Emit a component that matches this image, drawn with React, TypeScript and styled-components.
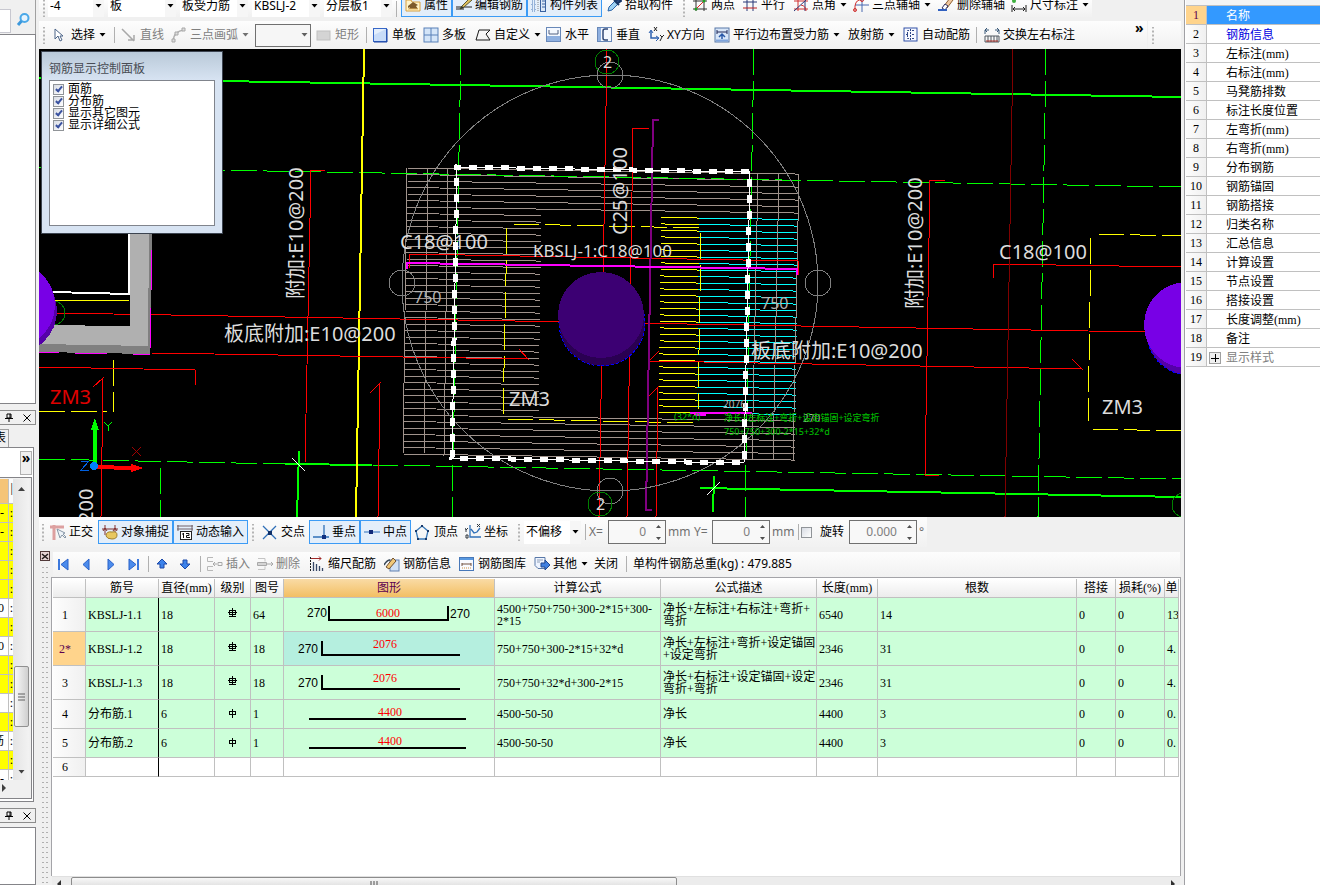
import React from 'react';
import styled, { createGlobalStyle, css } from 'styled-components';

const UI_FONT = '"Noto Sans", "Noto Sans CJK SC", sans-serif';
const GRID_FONT = '"Liberation Serif", "Noto Sans CJK SC", serif';

const GlobalStyle = createGlobalStyle`
  *, *::before, *::after { box-sizing: border-box; }
  body {
    margin: 0;
    background: #f0f0f0;
    color: #000;
    font: 12px/16px ${UI_FONT};
  }
  button, input, select { font: inherit; color: inherit; margin: 0; border-radius: 0; }
`;

/* ---------- layout ---------- */

const Shell = styled.div`
  display: grid;
  grid-template-columns: 39px minmax(0, 1fr) 136px;
  height: 100vh;
  overflow: hidden;
`;

const Workspace = styled.main`
  display: flex;
  flex-direction: column;
  min-width: 0;
  min-height: 0;
  padding-right: 3px;
`;

/* ---------- toolbar parts ---------- */

const ToolRow = styled.div`
  display: flex;
  flex: none;
  height: 28px;
  margin-top: 4px;
  gap: 1px;
`;

const Bar = styled.div<{ $grow?: boolean }>`
  display: flex;
  align-items: center;
  flex: ${p => (p.$grow ? '1 1 0' : 'none')};
  min-width: 0;
  overflow: hidden;
  white-space: nowrap;
  background: linear-gradient(#fdfdfd, #f1f1f1);
`;

const TopBar = styled(Bar)`
  align-items: flex-end;
  align-self: flex-start;
  height: 17px;
`;

const TailBar = styled(Bar)`
  width: 33px;
`;

const Grip = styled.span<{ $w?: number }>`
  flex: none;
  width: ${p => p.$w ?? 9}px;
  height: 17px;
  background: radial-gradient(circle, #b4b4b4 1px, transparent 1px) center / 4px 4px repeat-y;
`;

const Divider = styled.span<{ $w?: number }>`
  flex: none;
  width: ${p => p.$w ?? 6}px;
  height: 16px;
  background: linear-gradient(#b0b0b0, #b0b0b0) center / 1px 100% no-repeat;
`;

const Tool = styled.button<{ $w: number; $on?: boolean; $center?: boolean }>`
  display: flex;
  align-items: center;
  justify-content: ${p => (p.$center ? 'center' : 'flex-start')};
  gap: 3px;
  flex: none;
  width: ${p => p.$w}px;
  height: 24px;
  padding: ${p => (p.$center ? '0' : p.$on ? '0 3px' : '0 4px')};
  border: 0;
  background: transparent;
  white-space: nowrap;
  text-align: left;
  &:disabled { color: #808080; }
  ${p => p.$on && css`
    border: 1px solid #3c9bf5;
    background: #e3eefa;
  `}
`;

const PickWrap = styled.span<{ $w: number; $boxed?: boolean }>`
  display: flex;
  align-items: center;
  flex: none;
  position: relative;
  width: ${p => p.$w}px;
  height: 23px;
  background: linear-gradient(90deg, #fff calc(100% - 11px), #f6f6f6 calc(100% - 11px));
  ${p => p.$boxed && css`
    margin: 0 1px 0 3px;
    border: 1px solid #707070;
    background: #f6f6f6;
  `}
`;

const PickBox = styled.select`
  appearance: none;
  width: 100%;
  height: 100%;
  padding: 0 12px 0 2px;
  border: 0;
  background: transparent;
`;

const PickArrow = styled.span`
  display: flex;
  position: absolute;
  right: 2px;
  pointer-events: none;
`;

const TopPicks = styled.div`
  display: flex;
  gap: 4px;
`;

const Chevron = styled.span`
  margin-left: auto;
  width: 12px;
  font-size: 14px;
  font-weight: 700;
  line-height: 14px;
  align-self: flex-start;
`;

/* ---------- icons ---------- */

const Caret = ({ c = '#000' }: { c?: string }) => (
  <svg width="7" height="4" viewBox="0 0 7 4" aria-hidden="true"><path d="M.5 0h6L3.5 3.5z" fill={c} /></svg>
);

const DropCaret = styled.span`
  display: flex;
  margin-left: 1px;
`;

const Glyph = styled.svg`
  flex: none;
  width: 16px;
  height: 16px;
  fill: none;
  stroke-width: 1;
`;

const art: Record<string, React.ReactNode> = {
  props: <><path d="M1 3h5l1 2h8v9H1z" fill="#fff3c8" stroke="#d8a040" /><path d="M3 9l5-4 5 3-2 1 2 3H4l1-2-2 1z" fill="#7d5a2c" /><path d="M3 12h10" stroke="#e8b860" /></>,
  edit: <><path d="M0 10h16M0 12h8" stroke="#202020" /><path d="M5 10L14 1l2 2-8 7-4 2z" fill="#e0c060" stroke="#5a5a30" /><path d="M4 12l2-3 2 2z" fill="#303030" /></>,
  list: <><path d="M1 1h3v3H1zM1 6h3v3H1zM1 11h3v3H1z" stroke="#4a78b8" strokeDasharray="1 1" /><path d="M7 1v14" stroke="#888" strokeDasharray="1 1" /><rect x="9.500" y="1.500" width="5" height="13" fill="#dbe8f8" stroke="#3a62a0" /><path d="M11 4h3M11 7h3M11 10h3" stroke="#3a62a0" /></>,
  picker: <><path d="M2 14l1-4 6-6 3 3-6 6z" fill="#9ed2f4" stroke="#2c64a8" /><path d="M8 3l5 5M10 4l2-3 3 3-3 2" stroke="#183868" strokeWidth="2" fill="#2c4c88" /></>,
  twoPoint: <><path d="M4 2v12M12 2v12M1 4h14M1 12h14" stroke="#333" /><path d="M3 13L13 3" stroke="#e02020" /><circle cx="4" cy="12" r="1.500" fill="#20a020" /><circle cx="12" cy="4" r="1.500" fill="#20a020" /></>,
  parallel: <><path d="M5 2v12M11 2v12M1 5h14" stroke="#283878" /><path d="M1 11h14" stroke="#c02020" /></>,
  pointAngle: <><path d="M5 2v12M1 4h14M1 12h14" stroke="#d03030" /><path d="M1 14L13 3M12 4v10" stroke="#283878" /><path d="M8 8q5 1 5 6" stroke="#d03030" /></>,
  threeAxis: <><path d="M9 1v14M2 8h14" stroke="#4868b0" /><path d="M2 14V9Q3 2 9 3" stroke="#d03030" /><circle cx="2" cy="13" r="1.500" stroke="#d03030" /><circle cx="9" cy="3" r="1.500" stroke="#d03030" /></>,
  eraser: <><path d="M6 9l6-8 3 2-6 8z" fill="#f0c8a0" stroke="#906030" /><path d="M4 11l3-4 3 2-3 4z" fill="#fff" stroke="#303060" /><path d="M0 13h9" stroke="#3060c0" strokeWidth="2" /></>,
  measure: <><circle cx="3" cy="4" r="2" fill="#40b040" /><path d="M1 8v7M15 8v7M2 12h12M4 10l-2 2 2 2M12 10l2 2-2 2" stroke="#202020" /></>,
  cursor: <path d="M3 2v10l3-3 2 5 2-1-2-4h3z" fill="#fff" stroke="#4c6488" />,
  line: <path d="M1 2l12 12M7 13h6V8" stroke="#a8a8a8" strokeWidth="1.500" />,
  arc: <><path d="M2 14Q3 4 13 3" stroke="#b0b0b0" strokeWidth="1.500" /><path d="M1 12h3v3H1zM4 5h3v3H4zM11 1h3v3h-3z" fill="#ddd" stroke="#a8a8a8" /></>,
  rect: <rect x="1" y="4" width="13" height="9" fill="#d4d4d4" stroke="#c0c0c0" />,
  slab: <><rect x=".5" y="1.500" width="13" height="13" fill="#e4effc" stroke="#3868c8" /><path d="M1 14V8l12-6v12z" fill="#c8dcf8" /><path d="M14 2v13H1" stroke="#1840a0" /></>,
  slabs: <><rect x="1" y="1" width="14" height="14" fill="#d4e5f8" stroke="#5880b8" /><path d="M8 1v14M1 8h14" stroke="#5880b8" /></>,
  poly: <path d="M1 13L4 3h11l-4 4 4 6z" stroke="#181818" />,
  horiz: <><rect x=".5" y=".5" width="14" height="14" fill="#8fb0e0" stroke="#6888b8" /><path d="M1 1h13v8H1z" fill="#f4f8ff" /><path d="M3 3v4h9V3" stroke="#506080" /></>,
  vert: <><rect x=".5" y=".5" width="14" height="14" fill="#8fb0e0" stroke="#6888b8" /><path d="M4 1h10v13H4z" fill="#f4f8ff" /><path d="M11 2H8Q6 2 6 4v7q0 2 2 2h3" stroke="#304878" strokeWidth="1.500" /></>,
  xy: <><path d="M3 4v7h7" stroke="#2c60b0" strokeWidth="1.500" /><path d="M1 6l2-3 2 3M8 9l3 2-3 3" stroke="#2c60b0" /><path d="M6 0l3 4M9 0L6 4M12 8l2 2 2-2M14 10l-2 4" stroke="#202020" /></>,
  edge: <><rect x="1" y="1" width="14" height="14" fill="#d8e6f8" stroke="#5878a8" /><path d="M3 5h10M3 3v4M13 3v4" stroke="#202858" /><path d="M8 12V8M5 10l3-3 3 3" stroke="#2858a8" strokeWidth="1.500" /><path d="M2 13.500h12" stroke="#7fa4dc" strokeWidth="2" /></>,
  auto: <><rect x="1" y="1" width="13" height="13" fill="#f6f8ff" stroke="#3050a8" /><path d="M6 3.500H4.500v8H6M9 3.500h2M9 11.500h2M3 7.500h3M9 7.500h3M7.500 2v11" stroke="#304888" strokeDasharray="2 1" /></>,
  swap: <><path d="M1 7V3h4M3 1L1 3l2 2M15 7V3h-4M13 1l2 2-2 2" stroke="#385878" /><path d="M1 15V9h14v6zM4 9v6M7 9v6M10 9v6M13 9v6" stroke="#505860" /><path d="M2 14h12" stroke="#b03028" /></>,
  ortho: <><path d="M0 3h14M4 1v15" stroke="#dda0a0" strokeWidth="3" /><path d="M7 5l3 9 2-3 3 3 1-1-3-3 2-1z" fill="#eef3f8" stroke="#8898a8" /></>,
  snap: <><path d="M0 5h16M3 1v10M13 1v10" stroke="#803030" /><path d="M1 7l2-3 2 3M11 7l2-3 2 3" stroke="#803030" /><path d="M4 12q0-5 6-4 5-1 5 3 0 4-5 4-5 0-6-3z" fill="#e8c860" stroke="#a08030" /></>,
  dynamic: <><path d="M0 2h16M0 5h16M1 1v6M15 1v6" stroke="#706068" /><rect x="3.500" y="7.500" width="11" height="8" fill="#fff" stroke="#222" /><path d="M6.500 9v5M5 10h1M9 9.500h3v2H9.500v2H13" stroke="#111" /></>,
  cross: <><path d="M1 2l13 13M14 2L1 15" stroke="#3070b8" strokeWidth="1.300" /><rect x="6" y="7" width="4" height="4" fill="#103068" /></>,
  perp: <><path d="M11 1v12M0 13h16" stroke="#3070b8" strokeWidth="1.300" /><rect x="9" y="11" width="4" height="4" fill="#103080" /></>,
  mid: <><path d="M0 8h16" stroke="#6898d0" strokeWidth="1.500" /><rect x="5" y="6" width="4" height="4" fill="#102878" /></>,
  vertex: <><path d="M7 2l6 5-2 8H3L1 7z" stroke="#3878b8" strokeWidth="1.300" /><path d="M6 1h2v2H6zM0 6h2v2H0zM12 6h2v2h-2zM2 14h2v2H2zM10 14h2v2h-2z" fill="#183868" /></>,
  coord: <><path d="M5 1v12h11M6 5l3 4 3-1 3-4" stroke="#3070b8" strokeWidth="1.300" /><path d="M0 4l1 2 2-2M1 6v2M12 0l3 3M15 0l-3 3M1 11h2v3H1z" stroke="#303840" /></>,
  insert: <><path d="M6 1.500H.5v4H6M6 10.500H.5v4H6" stroke="#b8b8b8" /><path d="M6 8h4M11 6.500h4v3h-4zM8 6L6 8l2 2" stroke="#a8a8a8" /></>,
  remove: <><path d="M1 2.500h7v3M1 13.500h7v-3" stroke="#c4c4c4" /><path d="M.5 6.500h9v3h-9z" fill="#d4d4d4" stroke="#a8a8a8" /><path d="M10 8h6M14 6l2 2-2 2" stroke="#a8a8a8" /></>,
  scale: <><path d="M4.500 15V6M7.500 15V8M10.500 15v-5M13.500 15v-3" stroke="#384868" strokeWidth="1.300" /><path d="M2 2.500h10M10 .5l2 2-2 2" stroke="#a02828" /><path d="M1.500 1v14" stroke="#202020" strokeDasharray="2 1" /></>,
  info: <><rect x="6" y="4" width="9" height="11" fill="#d0e0f4" stroke="#6080b0" /><path d="M2 11l7-9 3 3-7 8z" fill="#f0c878" stroke="#705030" /><path d="M0 9q3-5 6-5" stroke="#384858" strokeWidth="1.500" /></>,
  gallery: <><rect x=".5" y="1.500" width="14" height="13" fill="#f8faff" stroke="#4878b8" /><path d="M1 3h13" stroke="#5898e0" strokeWidth="2" /><path d="M3 7v3M3 8h9M12 7v3" stroke="#705040" /><path d="M3 12h9" stroke="#d09040" strokeDasharray="1 1" /></>,
  other: <><path d="M1 1.500h10v11H4l-3-3z" fill="#eef4ff" stroke="#5878a8" /><path d="M3 4h6M3 6h3" stroke="#90a0b8" /><path d="M7 7h4V4l5 5-5 5v-3H7z" fill="#4080e0" stroke="#204890" /></>,
  first: <><path d="M4 3v11" stroke="#3c78dc" strokeWidth="2" /><path d="M13 3v11L6 8.500z" fill="#4c8cec" stroke="#2860c8" /></>,
  prev: <path d="M11 3v11L5 8.500z" fill="#4c8cec" stroke="#2860c8" />,
  next: <path d="M5 3v11l6-5.500z" fill="#4c8cec" stroke="#2860c8" />,
  last: <><path d="M12 3v11" stroke="#3c78dc" strokeWidth="2" /><path d="M3 3v11l7-5.500z" fill="#4c8cec" stroke="#2860c8" /></>,
  up: <path d="M8 3l5 5h-3v4H6V8H3z" fill="#3c82ea" stroke="#1c48a8" />,
  down: <path d="M8 13l5-5h-3V4H6v4H3z" fill="#3c82ea" stroke="#1c48a8" />,
};

const Icon = ({ n }: { n: string }) => <Glyph viewBox="0 0 16 16" aria-hidden="true">{art[n]}</Glyph>;

type ToolProps = { icon?: string; text?: string; name?: string; w: number; on?: boolean; off?: boolean; drop?: boolean };
const ToolItem = ({ icon, text, name, w, on, off, drop }: ToolProps) => (
  <Tool type="button" $w={w} $on={on} $center={!text} disabled={off} aria-label={name}>
    {icon && <Icon n={icon} />}
    {text}
    {drop && <DropCaret><Caret c={off ? '#707070' : '#000'} /></DropCaret>}
  </Tool>
);

const Pick = ({ value, name, w, boxed }: { value: string; name: string; w: number; boxed?: boolean }) => (
  <PickWrap $w={w} $boxed={boxed}>
    <PickBox aria-label={name} defaultValue={value}><option>{value}</option></PickBox>
    <PickArrow><Caret c={boxed ? '#606060' : '#000'} /></PickArrow>
  </PickWrap>
);

/* ---------- left docks ---------- */

const LeftDock = styled.aside`
  display: flex;
  flex-direction: column;
  min-height: 0;
  overflow: hidden;
`;

const SearchStrip = styled.div`
  display: flex;
  align-items: flex-end;
  flex: none;
  width: 36px;
  height: 34px;
  border-right: 1px solid #a0a0a0;
`;

const SearchBox = styled.input`
  width: 11px;
  height: 24px;
  margin-bottom: 1px;
  padding: 0;
  border: 1px solid #c8c8d0;
  border-left: 0;
  background: #fff;
`;

const SearchButton = styled.button`
  width: 24px;
  height: 24px;
  padding: 0;
  border: 0;
  background: transparent;
`;

const WhitePane = styled.div<{ $h?: number }>`
  flex: ${p => (p.$h ? 'none' : '1 1 0')};
  width: 36px;
  height: ${p => (p.$h ? `${p.$h}px` : 'auto')};
  border: 1px solid #848488;
  border-left: 0;
  background: #fff;
`;

const DockHead = styled.div`
  display: flex;
  align-items: center;
  flex: none;
  justify-content: flex-end;
  gap: 10px;
  width: 36px;
  height: 15px;
  margin: 6px 0 4px;
  padding-right: 4px;
  border: 1px solid #8c8c8c;
  border-left: 0;
`;

const HeadButton = styled.button`
  display: flex;
  padding: 0;
  border: 0;
  background: transparent;
`;

const PaneTab = styled.div`
  display: flex;
  justify-content: flex-end;
  flex: none;
  width: 9px;
  height: 18px;
  padding-right: 2px;
  border: 1px solid #a0a0a0;
  border-left: 0;
  border-bottom: 0;
  overflow: hidden;
`;

const ListFrame = styled.div`
  display: flex;
  flex-direction: column;
  flex: none;
  width: 34px;
  height: 355px;
  border: 1px solid #848488;
  border-left: 0;
  padding: 3px 1px 2px 0;
  background: #fff;
`;

const MoreButton = styled.button`
  align-self: flex-end;
  flex: none;
  width: 12px;
  height: 24px;
  padding: 0 0 10px;
  border: 1px solid #b0b0b0;
  background: #f0f0f0;
  font-size: 14px;
  font-weight: 700;
  line-height: 12px;
`;

const ListGrid = styled.div`
  display: grid;
  flex: 1;
  grid-template-columns: 13px 16px;
  grid-template-rows: 301px 16px;
  min-height: 0;
  margin-top: 2px;
  padding-top: 1px;
  border: 1px solid #848488;
  border-left: 0;
  background: #f0f0f0;
  overflow: hidden;
`;

const ListRows = styled.div`
  overflow: hidden;
`;

const ListRow = styled.div<{ $tone: string; $h?: number }>`
  display: grid;
  grid-template-columns: 8px 5px;
  height: ${p => p.$h ?? 19}px;
  border-bottom: 1px solid #c0c0c0;
  background: ${p => p.$tone};
  font-family: ${GRID_FONT};
  line-height: 18px;
  overflow: hidden;
`;

const ListCell = styled.span<{ $edge?: boolean }>`
  display: flex;
  justify-content: flex-end;
  padding-right: ${p => (p.$edge ? 0 : 4)}px;
  border-left: ${p => (p.$edge ? '1px solid #c0c0c0' : '0')};
  overflow: hidden;
`;

const VScroll = styled.div`
  display: flex;
  flex-direction: column;
  align-items: center;
  justify-content: space-between;
  padding: 8px 0 6px;
  background: linear-gradient(90deg, #e4e4e4, #f2f2f2);
`;

const VThumb = styled.div`
  display: flex;
  align-items: center;
  justify-content: center;
  width: 15px;
  height: 61px;
  margin-top: 132px;
  border: 1px solid #909090;
  border-radius: 2px;
  background: linear-gradient(90deg, #f8f8f8, #cfcfcf);
`;

const PaneHead = () => (
  <DockHead>
    <HeadButton type="button" aria-label="固定">
      <svg width="8" height="9" viewBox="0 0 8 9"><path d="M2 1h4v4H2zM0 5.500h8M4 6v3M5 1v4" stroke="#000" fill="none" /></svg>
    </HeadButton>
    <HeadButton type="button" aria-label="关闭">
      <svg width="8" height="8" viewBox="0 0 8 8"><path d="M.5.5l7 7M7.500.5l-7 7" stroke="#000" /></svg>
    </HeadButton>
  </DockHead>
);

const Y = '#ffff00';
const W = '#ffffff';
const fragments: [string, string][] = [
  ['-', Y], ['-', Y], ['', Y], ['', Y], ['', Y], ['0', W], ['', Y], ['0', W],
  ['', Y], ['', Y], ['、', W], ['', Y], ['筋', W], ['', Y], ['-', W],
];

const LeftColumn = () => (
  <LeftDock>
    <SearchStrip>
      <SearchBox aria-label="搜索内容" />
      <SearchButton type="button" aria-label="搜索">
        <svg width="16" height="16" viewBox="0 0 16 16" fill="none"><circle cx="9.500" cy="6" r="4" stroke="#4aa8e8" strokeWidth="2" fill="#e6f4fe" /><path d="M6.500 9L3 13" stroke="#3c98dc" strokeWidth="3" /></svg>
      </SearchButton>
    </SearchStrip>
    <WhitePane $h={370} />
    <PaneHead />
    <PaneTab>表</PaneTab>
    <ListFrame>
      <MoreButton type="button">»</MoreButton>
      <ListGrid>
        <ListRows>
          <ListRow $tone="linear-gradient(90deg, #f5c477 8px, #fafafa 8px)" $h={25}><ListCell /><ListCell $edge>|</ListCell></ListRow>
          {fragments.map(([t, tone], i) => <ListRow key={i} $tone={tone}><ListCell>{t}</ListCell><ListCell $edge>:</ListCell></ListRow>)}
        </ListRows>
        <VScroll>
          <svg width="7" height="4" viewBox="0 0 7 4"><path d="M0 4h7L3.500 0z" fill="#404040" /></svg>
          <VThumb><svg width="7" height="8" viewBox="0 0 7 8"><path d="M0 1h7M0 4h7M0 7h7" stroke="#606060" /></svg></VThumb>
          <Caret c="#404040" />
        </VScroll>
        <svg width="13" height="16" viewBox="0 0 13 16"><path d="M2 4v8l4-4z" fill="#404040" /></svg>
      </ListGrid>
    </ListFrame>
    <PaneHead />
    <WhitePane />
  </LeftDock>
);

/* ---------- drawing canvas ---------- */

const CanvasArea = styled.section`
  position: relative;
  flex: none;
  height: 468px;
  background: #000;
  overflow: hidden;
`;

const Drawing = styled.svg`
  display: block;
  width: 100%;
  height: 100%;
  fill: none;
  shape-rendering: crispEdges;
  font-family: ${UI_FONT};
`;

const hatchRows = Array.from({ length: 45 }, (_, i) => 168 + i * 6.5);
const lean = (x: number, y: number) => x - (y - 168) * 0.0145;
const fall = (x: number) => (x - 407) * 0.0155;

const Hatch = () => (
  <g>
    {hatchRows.map((y, i) => {
      const inner = i >= 7 && i <= 37;
      const seg = (x1: number, x2: number, c: string) => {
        const a = lean(x1, y);
        const b = lean(x2, y);
        return <path key={c + x1} d={`M${a} ${y + fall(x1)}L${b} ${y + fall(x2)}`} stroke={c} />;
      };
      return (
        <g key={i}>
          {inner
            ? [seg(407, 542, '#a0938c'), seg(662, 700, '#ffff00'), seg(700, 799, '#00ffff')]
            : seg(407, 799, '#a0938c')}
        </g>
      );
    })}
    <path d="M407 168L403 455M428 168L424 455M448 169L444 456M799 174L793 461M779 174L773 461M758 174L752 461" stroke="#a0938c" />
  </g>
);

const Plan = () => (
  <Drawing viewBox="39 49 1142 468" preserveAspectRatio="xMinYMin slice" role="img" aria-label="板受力筋平面图">
    <Hatch />
    <g stroke="#00ff00">
      <path d="M39 78L1181 97M285 464L372 465M299 451L297 517M700 488L1181 497M714 476L713 512" strokeWidth="2" />
      <path d="M39 167L1181 187M39 459L285 464M372 465L1181 479" strokeDasharray="26 6" />
      <path d="M461 49L452 517M754 49L745 517M1046 49L1038 517" strokeDasharray="26 6" />
      <path d="M160 468v49" strokeDasharray="26 6" />
    </g>
    <path d="M364 49L356 517" stroke="#ffff00" strokeWidth="2" />
    <g stroke="#ffff00" strokeDasharray="26 6">
      <path d="M113 360V412M39 411L107 412M507 228L503 415M513 224L700 228M701 233L698 410M507 419L693 423" />
      <path d="M1091 238L1088 422M1098 234L1181 236M1092 429L1181 431" />
    </g>
    <g stroke="#ff0000">
      <path d="M607 49L599 517M56 313L1145 332M151 353L528 359L519 349M649 361L1082 369L1072 359M649 361L659 351M649 396L658 387L656 517" />
      <path d="M325 170L311 170L305 463M378 517L380 383L370 393M101 517L103 378L93 387M39 367L195 370V385" />
      <path d="M649 128H633L627 517M945 180H930L925 475L939 476M993 278V264L1181 267M409 268V254L798 261V275" />
    </g>
    <path d="M1013 49L1005 517" stroke="#800000" />
    <path d="M659 120H653L646 510H652" stroke="#800080" strokeWidth="2" />
    <path d="M407 269V263L797 269V275M752 413H690" stroke="#ff00ff" strokeWidth="2" />
    <path d="M694 414h12" stroke="#ff00ff" strokeWidth="4" />
    <g>
      <path d="M52 292L129 294V234" stroke="#fff" strokeWidth="2" />
      <path d="M54 300L129 301" stroke="#ffff00" />
      <circle cx="53" cy="313" r="12" stroke="#008000" />
      <path d="M130 233H152L150 354L39 352V325L130 326z" fill="#b0b0b0" />
      <path d="M149 233H152L150 354L39 352V344L148 346z" fill="#808080" />
      <path d="M151 250V290M150 308V348M39 352h20M75 353L107 354M133 354h17" stroke="#ff00ff" />
      <circle cx="15" cy="311" r="42" fill="#5500a8" />
      <circle cx="12" cy="305" r="43" fill="#7800e6" />
    </g>
    <circle cx="602" cy="323" r="43" fill="#2a0052" stroke="#0000ff" strokeDasharray="3 2" />
    <circle cx="601" cy="315" r="43" fill="#3c0073" />
    <circle cx="1189" cy="333" r="42" fill="#5500a8" stroke="#0000ff" strokeDasharray="3 2" />
    <circle cx="1187" cy="325" r="43" fill="#7800e6" />
    <g stroke="#808080">
      <circle cx="610" cy="283" r="208" />
      <circle cx="610" cy="75" r="13" /><circle cx="610" cy="491" r="13" />
      <circle cx="402" cy="283" r="13" /><circle cx="818" cy="283" r="13" />
    </g>
    <g stroke="#008000">
      <circle cx="607" cy="62" r="12" /><circle cx="600" cy="504" r="12" /><circle cx="1184" cy="505" r="12" />
    </g>
    <g stroke="#fff">
      <path d="M457 167L750 172L744 463L452 458z" />
      <path d="M457 167L750 172L744 463L452 458z" strokeWidth="5" strokeDasharray="8 8" strokeDashoffset="4" />
      <path d="M292 458L305 471M707 495L720 482" />
    </g>
    <g>
      <path d="M95 464V430" stroke="#00ff00" strokeWidth="4" /><path d="M95 418l4 12h-8z" fill="#00ff00" />
      <path d="M96 467L131 468" stroke="#ff0000" strokeWidth="4" /><path d="M143 468l-12-4v8z" fill="#ff0000" />
      <circle cx="94" cy="466" r="4" fill="#0080ff" />
      <path d="M104 422l4 4 4-4M108 426v5" stroke="#00ff00" />
      <path d="M132 447l9 9M141 447l-9 9" stroke="#a00000" />
      <path d="M81 461h8l-8 9h8" stroke="#0060e0" />
    </g>
    <g fill="#dcdcdc" fontSize="20">
      <text x="400" y="249">C18@100</text>
      <text x="999" y="259">C18@100</text>
      <text x="224" y="341">板底附加:E10@200</text>
      <text x="751" y="358">板底附加:E10@200</text>
      <text x="509" y="406">ZM3</text>
      <text x="1102" y="414">ZM3</text>
      <text x="50" y="404" fill="#e00000">ZM3</text>
      <text transform="translate(303 299) rotate(-90)">附加:E10@200</text>
      <text transform="translate(922 309) rotate(-90)">附加:E10@200</text>
      <text transform="translate(627 235) rotate(-90)">C25@100</text>
      <text transform="translate(93 523) rotate(-90)">200</text>
      <text x="533" y="257" fontSize="17">KBSLJ-1:C18@100</text>
      <text x="603" y="68" fontSize="16">2</text>
      <text x="596" y="510" fontSize="16">2</text>
    </g>
    <g fill="#b4b4b4" fontSize="16">
      <text x="414" y="303">750</text>
      <text x="761" y="309">750</text>
      <text x="723" y="408" fontSize="10">2076</text>
      <text x="803" y="422" fontSize="10">270</text>
    </g>
    <g fill="#00b400" fontSize="9" fontWeight="500">
      <text x="674" y="420">(32*d)</text>
      <text x="724" y="421">净长+左标注+弯折+设定锚固+设定弯折</text>
      <text x="724" y="435">750+750+300-2*15+32*d</text>
    </g>
  </Drawing>
);

const FloatPanel = styled.div`
  position: absolute;
  top: 2px;
  left: 2px;
  width: 182px;
  height: 183px;
  padding: 9px 7px 7px;
  border: 1px solid #3c4450;
  background: linear-gradient(#b9c9d8, #d7e3f2 28px);
`;

const FloatTitle = styled.h2`
  margin: 0 0 3px;
  font-size: 12px;
  font-weight: 400;
  line-height: 16px;
  color: #484c54;
`;

const OptionList = styled.div`
  height: 146px;
  padding: 2px 3px;
  border: 1px solid #80848c;
  background: #fff;
`;

const Option = styled.label`
  display: flex;
  align-items: center;
  gap: 4px;
  height: 12px;
  line-height: 12px;
`;

const Check = styled.input`
  appearance: none;
  flex: none;
  position: relative;
  width: 11px;
  height: 11px;
  border: 1px solid #909498;
  background: linear-gradient(135deg, #d8dce4, #fff);
  &:checked::after {
    content: '';
    position: absolute;
    top: 0;
    left: 3px;
    width: 4px;
    height: 7px;
    border: solid #3a52a0;
    border-width: 0 2px 2px 0;
    transform: rotate(40deg);
  }
`;

/* ---------- status toolbar ---------- */

const StatusRow = styled.div`
  display: flex;
  flex: none;
  height: 30px;
`;

const FieldText = styled.label<{ $w: number }>`
  flex: none;
  width: ${p => p.$w}px;
  color: #707070;
`;

const Unit = styled.span<{ $w: number }>`
  flex: none;
  width: ${p => p.$w}px;
  padding-left: 2px;
  color: #707070;
`;

const SpinBox = styled.span<{ $w: number }>`
  display: flex;
  align-items: center;
  flex: none;
  width: ${p => p.$w}px;
  height: 24px;
  padding-right: 4px;
  border: 1px solid #707070;
  background: #f8f8f8;
`;

const SpinInput = styled.input`
  flex: 1;
  min-width: 0;
  padding: 0 10px 0 0;
  border: 0;
  background: transparent;
  color: #808080;
  text-align: right;
`;

const RotateLabel = styled.label`
  display: flex;
  align-items: center;
  flex: none;
  gap: 8px;
  width: 48px;
`;

const Spinner = ({ id, value, w, name }: { id?: string; value: string; w: number; name?: string }) => (
  <SpinBox $w={w}>
    <SpinInput id={id} aria-label={name} defaultValue={value} />
    <svg width="5" height="17" viewBox="0 0 5 17"><path d="M0 4h5L2.500 1zM0 13h5l-2.500 3z" fill="#505050" /></svg>
  </SpinBox>
);

/* ---------- rebar editor ---------- */

const EditorDock = styled.section`
  display: grid;
  grid-template-columns: 12px minmax(0, 1fr);
  flex: 1;
  min-height: 0;
`;

const Gutter = styled.div`
  display: flex;
  flex-direction: column;
  gap: 4px;
  padding: 4px 1px 0;
`;

const GutterDots = styled.div`
  flex: 1;
  margin-left: 1px;
  background: radial-gradient(circle, #b0b0b0 1px, transparent 1px) 0 0 / 4px 5px;
  width: 8px;
`;

const CloseBox = styled.button`
  display: flex;
  width: 10px;
  height: 10px;
  padding: 0;
  border: 0;
  background: transparent;
`;

const EditorBody = styled.div`
  display: flex;
  flex-direction: column;
  min-height: 0;
  padding-top: 5px;
`;

const EditorBar = styled(Bar)`
  height: 25px;
  margin: 0 1px 0 2px;
  padding-bottom: 1px;
`;

const Total = styled.span`
  padding-left: 3px;
`;

const Sheet = styled.div`
  flex: 1;
  min-height: 0;
  padding: 1px 1px 0;
  border: 1px solid #a4a4a8;
  border-bottom: 0;
  background: #fff;
  overflow: hidden;
`;

const Grid = styled.table`
  width: 100%;
  border-spacing: 0;
  table-layout: fixed;
  font-family: ${GRID_FONT};
  line-height: 12px;
`;

const Th = styled.th<{ $hot?: boolean }>`
  height: 19px;
  padding: 0;
  border-right: 1px solid #c0c0c0;
  border-bottom: 1px solid #c0c0c0;
  background: ${p => (p.$hot ? 'linear-gradient(#f9dba5, #f3bf63)' : 'linear-gradient(#ffffff, #ececec)')};
  color: ${p => (p.$hot ? '#5c0050' : '#000')};
  font-weight: 400;
  white-space: nowrap;
  overflow: hidden;
`;

const Td = styled.td<{ $tone?: string; $mid?: boolean; $bar?: boolean }>`
  padding: 0 0 0 ${p => (p.$mid ? 0 : 2)}px;
  border-right: 1px solid ${p => (p.$bar ? '#000' : '#c0c0c0')};
  border-bottom: 1px solid #c0c0c0;
  background: ${p => p.$tone ?? '#ccffd9'};
  text-align: ${p => (p.$mid ? 'center' : 'left')};
  white-space: pre;
  overflow: hidden;
`;

const RowHead = styled.th<{ $hot?: boolean; $side?: boolean }>`
  padding: 0 ${p => (p.$side ? 0 : 8)}px 0 0;
  border-right: 1px solid #c0c0c0;
  border-bottom: 1px solid #c0c0c0;
  background: ${p => (p.$hot ? '#ffd48c' : 'linear-gradient(90deg, #fdfdfd, #f0f0f0)')};
  color: ${p => (p.$hot ? '#5c0050' : '#000')};
  font-weight: 400;
  text-align: center;
`;

const Row = styled.tr<{ $h: number }>`
  height: ${p => p.$h}px;
`;

const Shape = styled.svg`
  display: block;
  width: 210px;
  stroke: none;
  font-family: ${GRID_FONT};
`;

const DimText = styled.text`
  font-family: "Liberation Sans", sans-serif;
`;

const HScroll = styled.div`
  display: flex;
  align-items: flex-start;
  flex: none;
  height: 9px;
  margin: 0 1px;
  padding: 0 3px;
  background: #ececec;
  border-top: 1px solid #e0e0e0;
  overflow: hidden;
`;

const HThumb = styled.div`
  flex: none;
  display: flex;
  justify-content: center;
  width: 54%;
  height: 16px;
  margin: 0 auto 0 8px;
  padding-top: 3px;
  border: 1px solid #8c8c8c;
  border-radius: 2px;
  background: linear-gradient(#f8f8f8, #d0d0d0);
`;

const Grade = ({ high }: { high?: boolean }) => (
  <svg width="11" height="11" viewBox="0 0 11 11" fill="none" stroke="#000" shapeRendering="crispEdges">
    {high
      ? <path d="M2.500 2.500h6v4h-6zM5.500 0v9M1 4.500h9M2 8.500h7" />
      : <path d="M2.500 3.500h6v3h-6zM5.500 1v9" />}
  </svg>
);

const ShapeArt = ({ kind, size }: { kind: 'u' | 'l' | 'line'; size: string }) => {
  if (kind === 'u') {
    return (
      <Shape viewBox="0 0 210 33" height="33">
        <path d="M45 8V22H164V8" fill="none" stroke="#000" strokeWidth="2" />
        <DimText x="23" y="19">270</DimText><DimText x="166" y="20">270</DimText>
        <text x="92" y="19" fill="#ff0000">{size}</text>
      </Shape>
    );
  }
  if (kind === 'l') {
    return (
      <Shape viewBox="0 0 210 33" height="33">
        <path d="M38 9V23H176" fill="none" stroke="#000" strokeWidth="2" />
        <DimText x="14" y="21">270</DimText>
        <text x="89" y="16" fill="#ff0000">{size}</text>
      </Shape>
    );
  }
  return (
    <Shape viewBox="0 0 210 28" height="28">
      <path d="M25 19H182" stroke="#000" strokeWidth="2" />
      <text x="94" y="16" fill="#ff0000">{size}</text>
    </Shape>
  );
};

type Rebar = { no: string; name: string; dia: string; high: boolean; fig: string; kind: 'u' | 'l' | 'line'; size: string; calc: string; desc: string; len: string; count: string; unit: string; h: number };
const rebars: Rebar[] = [
  { no: '1', name: 'KBSLJ-1.1', dia: '18', high: true, fig: '64', kind: 'u', size: '6000', calc: '4500+750+750+300-2*15+300-\n2*15', desc: '净长+左标注+右标注+弯折+\n弯折', len: '6540', count: '14', unit: '13', h: 34 },
  { no: '2*', name: 'KBSLJ-1.2', dia: '18', high: true, fig: '18', kind: 'l', size: '2076', calc: '750+750+300-2*15+32*d', desc: '净长+左标注+弯折+设定锚固\n+设定弯折', len: '2346', count: '31', unit: '4.', h: 34 },
  { no: '3', name: 'KBSLJ-1.3', dia: '18', high: true, fig: '18', kind: 'l', size: '2076', calc: '750+750+32*d+300-2*15', desc: '净长+右标注+设定锚固+设定\n弯折+弯折', len: '2346', count: '31', unit: '4.', h: 34 },
  { no: '4', name: '分布筋.1', dia: '6', high: false, fig: '1', kind: 'line', size: '4400', calc: '4500-50-50', desc: '净长', len: '4400', count: '3', unit: '0.', h: 29 },
  { no: '5', name: '分布筋.2', dia: '6', high: false, fig: '1', kind: 'line', size: '4400', calc: '4500-50-50', desc: '净长', len: '4400', count: '3', unit: '0.', h: 29 },
];
const columnWidths = [33, 73, 56, 36, 33, 211, 166, 156, 61, 199, 39, 49];
const columnNames = ['', '筋号', '直径(mm)', '级别', '图号', '图形', '计算公式', '公式描述', '长度(mm)', '根数', '搭接', '损耗(%)', '单'];

const RebarGrid = () => (
  <Grid>
    <colgroup>
      {columnWidths.map((w, i) => <col key={i} width={w} />)}
      <col />
    </colgroup>
    <thead>
      <tr>{columnNames.map((n, i) => <Th key={i} scope="col" $hot={n === '图形'}>{n}</Th>)}</tr>
    </thead>
    <tbody>
      {rebars.map(r => {
        const hot = r.no === '2*';
        return (
          <Row key={r.no} $h={r.h}>
            <RowHead scope="row" $hot={hot}>{r.no}</RowHead>
            <Td $bar>{r.name}</Td>
            <Td>{r.dia}</Td>
            <Td $mid><Grade high={r.high} /></Td>
            <Td>{r.fig}</Td>
            <Td $mid $tone={hot ? '#b5efdf' : undefined}><ShapeArt kind={r.kind} size={r.size} /></Td>
            <Td>{r.calc}</Td>
            <Td>{r.desc}</Td>
            <Td>{r.len}</Td>
            <Td>{r.count}</Td>
            <Td>0</Td>
            <Td>0</Td>
            <Td>{r.unit}</Td>
          </Row>
        );
      })}
      <Row $h={19}>
        <RowHead scope="row">6</RowHead>
        {columnNames.slice(1).map((n, i) => <Td key={n} $tone="#fff" $bar={i === 0} />)}
      </Row>
    </tbody>
  </Grid>
);

/* ---------- property panel ---------- */

const PropertyDock = styled.aside`
  padding-left: 1px;
  border-left: 1px solid #a0a0a4;
  background: #fff;
  overflow: hidden;
`;

const PropertyHead = styled.div`
  height: 6px;
  border-bottom: 1px solid #c0c0c0;
  background: #f4f4f4;
`;

const PropertyCell = styled.td<{ $tone?: string }>`
  padding: 2px 0 0 19px;
  border-bottom: 1px solid #c0c0c0;
  background: ${p => (p.$tone === 'picked' ? '#3399ff' : '#fff')};
  color: ${p => (p.$tone === 'picked' ? '#fff' : p.$tone === 'key' ? '#0000e0' : p.$tone === 'dim' ? '#808080' : '#000')};
  white-space: nowrap;
`;

const ExpandButton = styled.button`
  display: inline-flex;
  width: 12px;
  height: 12px;
  margin: 0 5px 0 -17px;
  padding: 1px;
  border: 1px solid #a0a0a0;
  background: #f0f0f0;
  vertical-align: top;
`;

const properties = ['名称', '钢筋信息', '左标注(mm)', '右标注(mm)', '马凳筋排数', '标注长度位置', '左弯折(mm)', '右弯折(mm)', '分布钢筋', '钢筋锚固', '钢筋搭接', '归类名称', '汇总信息', '计算设置', '节点设置', '搭接设置', '长度调整(mm)', '备注', '显示样式'];
const toneOf = (i: number) => (i === 0 ? 'picked' : i === 1 ? 'key' : i === 18 ? 'dim' : undefined);

const Properties = () => (
  <PropertyDock>
    <PropertyHead />
    <Grid>
      <colgroup><col width={21} /><col /></colgroup>
      <tbody>
        {properties.map((p, i) => (
          <Row key={p} $h={19}>
            <RowHead scope="row" $side $hot={i === 0}>{i + 1}</RowHead>
            <PropertyCell $tone={toneOf(i)}>
              {i === 18 && (
                <ExpandButton type="button" aria-label="展开">
                  <svg width="8" height="8" viewBox="0 0 8 8"><path d="M0 4h8M4 0v8" stroke="#000" shapeRendering="crispEdges" /></svg>
                </ExpandButton>
              )}
              {p}
            </PropertyCell>
          </Row>
        ))}
      </tbody>
    </Grid>
  </PropertyDock>
);

/* ---------- page ---------- */

export default function App() {
  return (
    <>
      <GlobalStyle />
      <Shell>
        <LeftColumn />
        <Workspace>
          <TopBar>
            <Grip />
            <TopPicks>
              <Pick name="楼层" value="-4" w={56} />
              <Pick name="构件类别" value="板" w={68} />
              <Pick name="构件类型" value="板受力筋" w={68} />
              <Pick name="构件" value="KBSLJ-2" w={68} />
              <Pick name="分层" value="分层板1" w={68} />
            </TopPicks>
            <Divider $w={9} />
            <ToolItem icon="props" text="属性" w={51} on />
            <ToolItem icon="edit" text="编辑钢筋" w={75} on />
            <ToolItem icon="list" text="构件列表" w={75} on />
            <ToolItem icon="picker" text="拾取构件" w={77} />
            <Grip />
            <ToolItem icon="twoPoint" text="两点" w={50} />
            <ToolItem icon="parallel" text="平行" w={51} />
            <ToolItem icon="pointAngle" text="点角" w={60} drop />
            <ToolItem icon="threeAxis" text="三点辅轴" w={85} drop />
            <ToolItem icon="eraser" text="删除辅轴" w={73} />
            <ToolItem icon="measure" text="尺寸标注" w={85} drop />
          </TopBar>
          <ToolRow>
            <Bar $grow>
              <Grip />
              <ToolItem icon="cursor" text="选择" w={63} drop />
              <Divider />
              <ToolItem icon="line" text="直线" w={50} off />
              <ToolItem icon="arc" text="三点画弧" w={85} off drop />
              <Pick name="绘制方式" value="" w={56} boxed />
              <ToolItem icon="rect" text="矩形" w={51} off />
              <Divider />
              <ToolItem icon="slab" text="单板" w={50} />
              <ToolItem icon="slabs" text="多板" w={52} />
              <ToolItem icon="poly" text="自定义" w={71} drop />
              <ToolItem icon="horiz" text="水平" w={51} />
              <ToolItem icon="vert" text="垂直" w={51} />
              <ToolItem icon="xy" text="XY方向" w={66} />
              <ToolItem icon="edge" text="平行边布置受力筋" w={134} drop />
              <ToolItem text="放射筋" w={55} drop />
              <ToolItem icon="auto" text="自动配筋" w={74} />
              <Divider $w={7} />
              <ToolItem icon="swap" text="交换左右标注" w={99} />
              <Chevron>»</Chevron>
            </Bar>
            <TailBar><Grip /></TailBar>
          </ToolRow>
          <CanvasArea>
            <Plan />
            <FloatPanel>
              <FloatTitle>钢筋显示控制面板</FloatTitle>
              <OptionList>
                {['面筋', '分布筋', '显示其它图元', '显示详细公式'].map(t => (
                  <Option key={t}><Check type="checkbox" defaultChecked />{t}</Option>
                ))}
              </OptionList>
            </FloatPanel>
          </CanvasArea>
          <StatusRow>
            <Bar>
              <Grip $w={7} />
              <ToolItem icon="ortho" text="正交" w={52} />
              <ToolItem icon="snap" text="对象捕捉" w={75} on />
              <ToolItem icon="dynamic" text="动态输入" w={75} on />
              <Grip $w={10} />
              <ToolItem icon="cross" text="交点" w={51} />
              <ToolItem icon="perp" text="垂点" w={51} on />
              <ToolItem icon="mid" text="中点" w={51} on />
              <ToolItem icon="vertex" text="顶点" w={50} />
              <ToolItem icon="coord" text="坐标" w={52} />
              <Grip $w={11} />
              <Pick name="偏移方式" value="不偏移" w={57} />
              <Divider $w={8} />
              <FieldText $w={19} htmlFor="offset-x">X=</FieldText>
              <Spinner id="offset-x" value="0" w={58} />
              <Unit $w={28}>mm</Unit>
              <FieldText $w={18} htmlFor="offset-y">Y=</FieldText>
              <Spinner id="offset-y" value="0" w={58} />
              <Unit $w={25}>mm</Unit>
              <Divider />
              <RotateLabel><Check type="checkbox" />旋转</RotateLabel>
              <Spinner name="旋转角度" value="0.000" w={68} />
              <Unit $w={10}>°</Unit>
            </Bar>
          </StatusRow>
          <EditorDock>
            <Gutter>
              <CloseBox type="button" aria-label="关闭面板">
                <svg width="10" height="10" viewBox="0 0 10 10"><rect x=".5" y=".5" width="9" height="9" fill="#e8d4d4" stroke="#503838" /><path d="M2 3l6 5M8 3L2 8" stroke="#201818" strokeWidth="1.500" /></svg>
              </CloseBox>
              <GutterDots />
            </Gutter>
            <EditorBody>
              <EditorBar>
                <ToolItem icon="first" name="首条" w={20} />
                <ToolItem icon="prev" name="上一条" w={26} />
                <ToolItem icon="next" name="下一条" w={24} />
                <ToolItem icon="last" name="末条" w={22} />
                <Divider />
                <ToolItem icon="up" name="上移" w={22} />
                <ToolItem icon="down" name="下移" w={24} />
                <Divider />
                <ToolItem icon="insert" text="插入" w={50} off />
                <ToolItem icon="remove" text="删除" w={52} off />
                <ToolItem icon="scale" text="缩尺配筋" w={75} />
                <ToolItem icon="info" text="钢筋信息" w={75} />
                <ToolItem icon="gallery" text="钢筋图库" w={75} />
                <ToolItem icon="other" text="其他" w={60} drop />
                <ToolItem text="关闭" w={32} />
                <Divider $w={8} />
                <Total>单构件钢筋总重(kg) : 479.885</Total>
              </EditorBar>
              <Sheet><RebarGrid /></Sheet>
              <HScroll>
                <svg width="8" height="14" viewBox="0 0 8 14"><path d="M6 3v8L2 7z" fill="#303030" /></svg>
                <HThumb><svg width="8" height="8" viewBox="0 0 8 8"><path d="M1 0v7M4 0v7M7 0v7" stroke="#505050" /></svg></HThumb>
                <svg width="8" height="14" viewBox="0 0 8 14"><path d="M2 3v8l4-4z" fill="#303030" /></svg>
              </HScroll>
            </EditorBody>
          </EditorDock>
        </Workspace>
        <Properties />
      </Shell>
    </>
  );
}
